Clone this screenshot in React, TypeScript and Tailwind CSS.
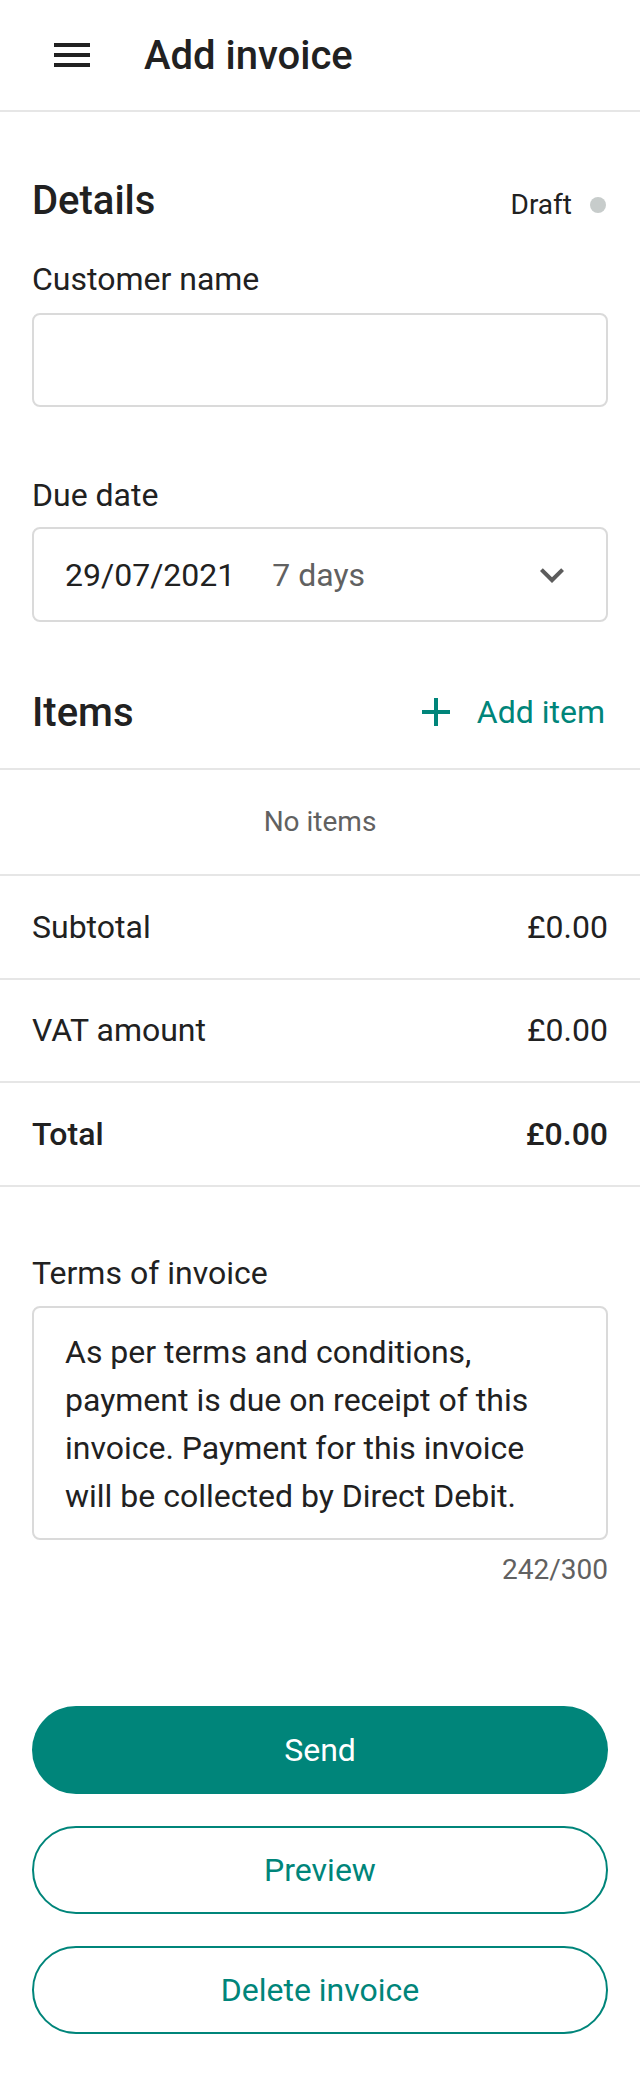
import React from "react";

const TEAL = "text-[#00857a]";

function MenuIcon() {
    return <svg viewBox="0 0 24 24" className="w-12 h-12 fill-[#212121]">
        <path d="M3 18h18v-2H3v2zm0-5h18v-2H3v2zm0-7v2h18V6H3z"/>
    </svg>
}

function ChevronDown() {
    return <svg viewBox="0 0 24 24" className="w-12 h-12 fill-[#5c5c5c]">
        <path d="M16.59 8.59L12 13.17 7.41 8.59 6 10l6 6 6-6z"/>
    </svg>
}

function PlusIcon() {
    return <svg viewBox="5 5 14 14" className="w-7 h-7 fill-[#00857a]">
        <path d="M19 13h-6v6h-2v-6H5v-2h6V5h2v6h6v2z"/>
    </svg>
}

function TotalRow({label, value, strong}: { label: string, value: string, strong?: boolean }) {
    return <div
        className={`flex items-center justify-between h-[103.5px] px-8 border-b-2 border-[#e6e6e6] text-[32px] ${strong ? "font-medium" : ""}`}>
        <span>{label}</span>
        <span>{value}</span>
    </div>
}

const terms = [
    "As per terms and conditions,",
    "payment is due on receipt of this",
    "invoice. Payment for this invoice",
    "will be collected by Direct Debit.",
]

export default function App() {
    return <div className="w-[640px] min-h-[2084px] bg-white text-[#212121] font-['Roboto',sans-serif]">
        <header className="h-[112px] flex items-center border-b-2 border-[#e6e6e6] pl-12">
            <MenuIcon/>
            <h1 className="ml-12 mt-[2px] text-[40px] font-medium leading-[48px]">Add invoice</h1>
        </header>

        <section className="px-8">
            <div className="flex items-baseline justify-between mt-[65px]">
                <h2 className="text-[40px] font-medium leading-[48px]">Details</h2>
                <div className="flex items-center gap-[18px] mr-[2px]">
                    <span className="text-[28px] leading-[32px]">Draft</span>
                    <span className="w-4 h-4 rounded-full bg-[#c7cccb]"/>
                </div>
            </div>

            <label className="block mt-[34px] text-[32px] leading-[40px]">Customer name</label>
            <div className="mt-[14px] h-[94px] border-2 border-[#dadada] rounded-lg"/>

            <label className="block mt-[68px] text-[32px] leading-[40px]">Due date</label>
            <div className="mt-3 h-[95px] border-2 border-[#dadada] rounded-lg flex items-center pl-[31px] pr-[30px]">
                <span className="text-[32px]">29/07/2021</span>
                <span className="ml-[37px] text-[32px] text-[#616161]">7 days</span>
                <span className="ml-auto"><ChevronDown/></span>
            </div>

            <div className="flex items-baseline justify-between mt-[67px]">
                <h2 className="text-[40px] font-medium leading-[48px]">Items</h2>
                <button className={`flex items-center gap-[27px] mr-[3px] text-[32px] leading-[40px] ${TEAL}`}>
                    <PlusIcon/>
                    <span>Add item</span>
                </button>
            </div>
        </section>

        <div className="mt-[31px] border-t-2 border-[#e6e6e6]">
            <div
                className="h-[106px] flex items-center justify-center border-b-2 border-[#e6e6e6] text-[28px] text-[#616161]">
                No items
            </div>
            <TotalRow label="Subtotal" value="£0.00"/>
            <TotalRow label="VAT amount" value="£0.00"/>
            <TotalRow label="Total" value="£0.00" strong/>
        </div>

        <section className="px-8 pb-12">
            <label className="block mt-[66px] text-[32px] leading-[40px]">Terms of invoice</label>
            <div className="mt-[13px] h-[234px] border-2 border-[#dadada] rounded-lg pl-[31px] pt-[20px]">
                {terms.map(line => <div key={line} className="text-[32px] leading-[48px]">{line}</div>)}
            </div>
            <div className="mt-[14px] text-right text-[28px] leading-[32px] text-[#616161]">242/300</div>

            <div className="mt-[120px] flex flex-col gap-8">
                <button className="h-[88px] rounded-full bg-[#00857a] text-white text-[32px]">Send</button>
                <button className={`h-[88px] rounded-full border-2 border-[#00857a] text-[32px] ${TEAL}`}>Preview</button>
                <button className={`h-[88px] rounded-full border-2 border-[#00857a] text-[32px] ${TEAL}`}>Delete invoice
                </button>
            </div>
        </section>
    </div>
}
